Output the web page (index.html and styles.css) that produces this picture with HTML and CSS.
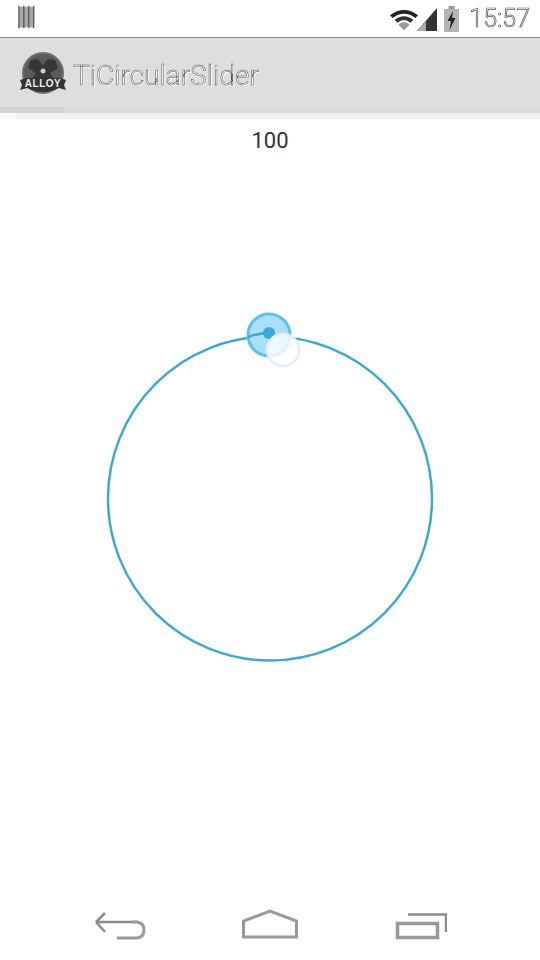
FILE: index.html
```html
<!DOCTYPE html>
<html lang="en">
<head>
    <meta charset="UTF-8">
    <meta name="viewport" content="width=device-width, initial-scale=1.0">
    <title>TiCircularSlider</title>
    <link rel="stylesheet" href="styles.css">
</head>
<body>
    <div class="status-bar">
        <svg class="notif-icon" width="20" height="26" viewBox="0 0 20 26">
            <rect x="1" y="1" width="17" height="23" fill="#a8a8a8"/>
            <path d="M1 0V25M6.500 0V25M12 0V25M17.500 0V25" stroke="#444" stroke-width="1.200" fill="none"/>
        </svg>
        <div class="status-right">
            <svg width="30" height="24" viewBox="0 0 32 24">
                <path d="M1 8Q16 -3 31 8L28 11Q16 2 4 11Z" fill="#222"/>
                <path d="M6 13Q16 5 26 13L23 16Q16 10 9 16Z" fill="#333"/>
                <path d="M10 18Q16 13 22 18L16 24Z" fill="#999"/>
            </svg>
            <svg class="signal" width="20" height="24" viewBox="0 0 20 24">
                <path d="M0 24L20 1V24Z" fill="#333"/>
                <path d="M0 24L9 14V24Z" fill="#aaa"/>
            </svg>
            <svg class="battery" width="15" height="26" viewBox="0 0 15 26">
                <rect x="4.500" y="0" width="6" height="3" fill="#999"/>
                <rect x="0" y="3" width="15" height="23" fill="#b5b5b5"/>
                <path d="M9 5L3.500 15H7L5.500 24L11.500 12H8Z" fill="#222"/>
            </svg>
            <span class="clock">15:57</span>
        </div>
    </div>

    <header class="action-bar">
        <svg class="logo" width="46" height="46" viewBox="0 0 46 46">
            <circle cx="23" cy="21" r="20" fill="#5a5a5a" stroke="#6e6e6e" stroke-width="2"/>
            <path d="M11 8L18 7L23 13L28 7L35 8L38 16L30 21L35 29H11L16 21L8 16Z" fill="#363636"/>
            <circle cx="23" cy="19" r="2.500" fill="#ccc"/>
            <path d="M0 28L6 26H40L46 28L44 33L46 38L39 36Q23 44 7 36L0 38L2 33Z" fill="#333"/>
            <text class="logo-text" x="23" y="35" text-anchor="middle">ALLOY</text>
        </svg>
        <h1 class="title">TiCircularSlider</h1>
    </header>
    <div class="bar-shadow">
        <div class="shadow-dark"><div class="shadow-dark-left"></div></div>
        <div class="shadow-light"><div class="shadow-light-left"></div></div>
    </div>

    <main class="content">
        <div class="value">100</div>
        <svg class="slider" width="340" height="380" viewBox="0 0 340 380">
            <circle cx="170" cy="208.500" r="162" fill="none" stroke="#3fa9cd" stroke-width="2.500"/>
            <circle cx="169" cy="45" r="21" fill="#a9e0f7" stroke="#5cc3e8" stroke-width="3"/>
            <path d="M148 47Q159 43 169 43" fill="none" stroke="#3fa9cd" stroke-width="2.500"/>
            <circle cx="169" cy="43" r="6" fill="#35a9dc"/>
            <circle cx="183" cy="60" r="16" fill="#fff" fill-opacity="0.800" stroke="#e6edf7" stroke-width="2.500"/>
        </svg>
    </main>

    <nav class="nav-bar">
        <svg width="52" height="32" viewBox="0 0 52 32">
            <path d="M44 14H2M2 14L11 5M2 14L11 24" fill="none" stroke="#8c8c8c" stroke-width="2.500"/>
            <path d="M38 14H43Q50 15 50 22Q50 29 43 30H23" fill="none" stroke="#999" stroke-width="3"/>
        </svg>
        <svg width="56" height="32" viewBox="0 0 56 32">
            <path d="M1.500 29V13L28 3L54.500 13V29Z" fill="none" stroke="#999" stroke-width="3"/>
        </svg>
        <svg width="53" height="32" viewBox="0 0 53 32">
            <rect x="3.500" y="15.500" width="40" height="14" fill="none" stroke="#999" stroke-width="3.500"/>
            <path d="M14 6.500H52V24" fill="none" stroke="#8c8c8c" stroke-width="2.500"/>
        </svg>
    </nav>
</body>
</html>
```

FILE: styles.css
```css
body {
    margin: 0;
    height: 960px;
    background-color: #fff;
    font-family: Roboto, "Liberation Sans", sans-serif;
    display: flex;
    flex-direction: column;
    overflow: hidden;
}
.status-bar {
    height: 37px;
    border-bottom: 1px solid #888;
    display: flex;
    justify-content: space-between;
    align-items: center;
    padding: 0 10px 0 18px;
}
.notif-icon {
    width: 18px;
    height: 25px;
    margin-top: -3px;
}
.status-right {
    display: flex;
    align-items: center;
}
.signal {
    margin-left: -2px;
}
.battery {
    margin-left: 7px;
}
.clock {
    margin-left: 10px;
    font-size: 25px;
    font-weight: 300;
    color: #fff;
    -webkit-text-stroke: 0.7px #555;
    filter: grayscale(1);
}
.action-bar {
    height: 69px;
    box-sizing: border-box;
    padding: 5px 0 0 20px;
    background-color: #dedede;
    display: flex;
    align-items: center;
}
.logo-text {
    font-family: "Liberation Sans", sans-serif;
    font-size: 10px;
    font-weight: bold;
    fill: #eee;
    letter-spacing: 0.5px;
}
.title {
    margin: 0 0 0 7px;
    font-size: 28px;
    font-weight: 300;
    color: #fff;
    -webkit-text-stroke: 0.5px #444;
    text-shadow: 1px 1px 0 #fff;
    filter: grayscale(1);
}
.bar-shadow {
    height: 12px;
}
.shadow-dark {
    height: 6px;
    background-color: #dadada;
}
.shadow-dark-left {
    width: 64px;
    height: 6px;
    background-color: #d2d2d2;
}
.shadow-light {
    height: 6px;
    background-color: #f1f1f1;
}
.shadow-light-left {
    width: 16px;
    height: 6px;
    background-color: #f8f8f8;
}
.content {
    flex: 1;
    display: flex;
    flex-direction: column;
    align-items: center;
}
.value {
    margin-top: 9px;
    font-size: 22px;
    line-height: 26px;
    color: #333;
}
.slider {
    margin-top: 136px;
}
.nav-bar {
    height: 62px;
    box-sizing: border-box;
    padding: 10px 93px 0 94px;
    display: flex;
    justify-content: space-between;
    align-items: flex-start;
}
```
